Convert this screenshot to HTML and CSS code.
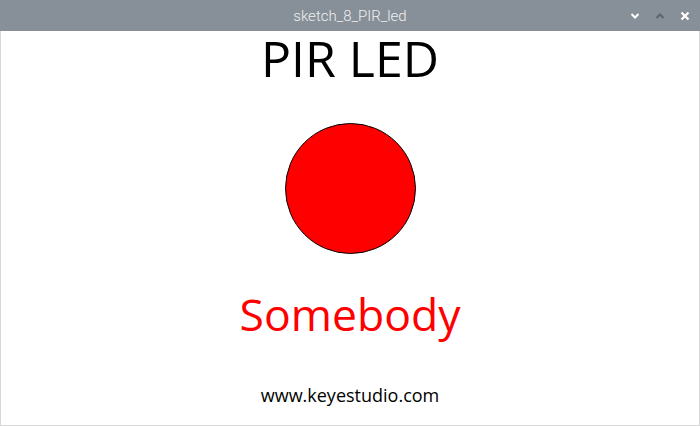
FILE: index.html
```html
<!DOCTYPE html>
<html>
<head>
<meta charset="utf-8">
<link rel="stylesheet" href="styles.css">
</head>
<body>
<div class="window">
  <div class="titlebar">
    <span class="title">sketch_8_PIR_led</span>
    <div class="controls">
      <svg class="ctl" width="10" height="8" viewBox="0 0 10 8"><path d="M1.5 2 L5 5.5 L8.5 2" fill="none" stroke="#ffffff" stroke-width="2"/></svg>
      <svg class="ctl" width="10" height="8" viewBox="0 0 10 8"><path d="M1.5 6 L5 2.5 L8.5 6" fill="none" stroke="#5d646b" stroke-width="2"/></svg>
      <svg class="ctl" width="10" height="10" viewBox="0 0 10 10"><path d="M1.5 1.5 L8.5 8.5 M8.5 1.5 L1.5 8.5" fill="none" stroke="#ffffff" stroke-width="2.2"/></svg>
    </div>
  </div>
  <div class="canvas">
    <div class="heading">PIR LED</div>
    <div class="led"></div>
    <div class="status">Somebody</div>
    <div class="site">www.keyestudio.com</div>
  </div>
</div>
</body>
</html>
```
FILE: styles.css
```css
html, body { margin: 0; padding: 0; }
body { width: 700px; height: 426px; overflow: hidden; background: #ffffff; }
.window { width: 700px; height: 426px; display: flex; flex-direction: column; }
.titlebar {
  height: 31px; background: #878f98; position: relative;
  display: flex; align-items: center; justify-content: center; flex: none;
}
.title { font-family: Roboto, "Liberation Sans", sans-serif; font-size: 15px; color: #eef0f2; font-weight: 300; }
.controls { position: absolute; right: 10px; top: 11px; display: flex; gap: 15px; align-items: center; }
.canvas {
  flex: 1; border: 1px solid #d8d8d8; border-top: none;
  display: flex; flex-direction: column; align-items: center;
  font-family: "Open Sans", "Noto Sans", sans-serif;
}
.heading { font-size: 50px; line-height: 50px; margin-top: 2px; color: #000; }
.led { width: 129px; height: 129px; border: 1px solid #000; border-radius: 50%; background: #ff0000; margin-top: 40px; }
.status { font-size: 44.5px; line-height: 50px; color: #ff0000; margin-top: 35px; }
.site { font-size: 18px; line-height: 20px; color: #000; margin-top: 46px; }
```
